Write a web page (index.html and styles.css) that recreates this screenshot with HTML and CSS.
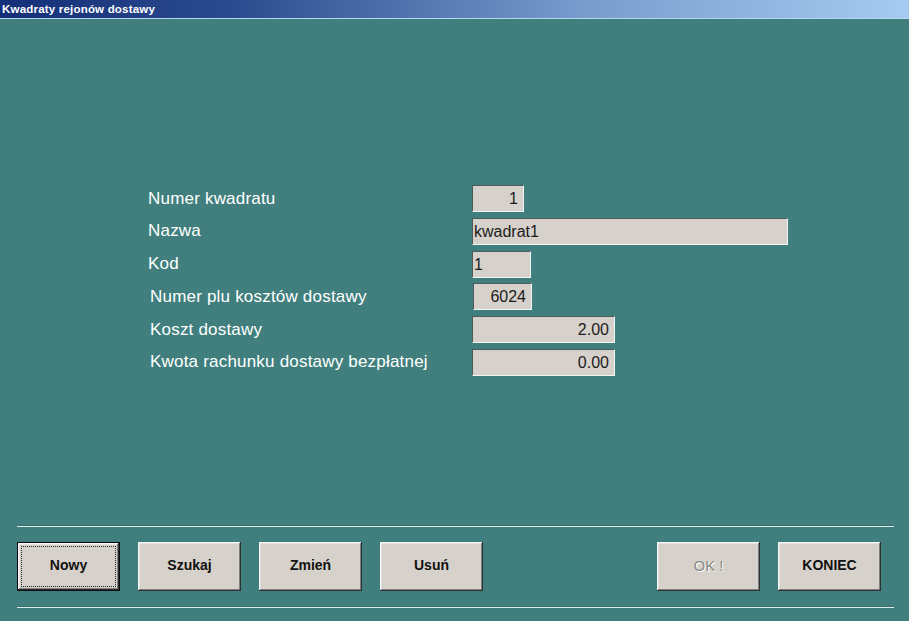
FILE: index.html
```html
<!DOCTYPE html>
<html lang="pl">
<head>
<meta charset="utf-8">
<title>Kwadraty rejonów dostawy</title>
<link rel="stylesheet" href="styles.css">
</head>
<body>
<div class="window">
  <div class="titlebar">Kwadraty rejonów dostawy</div>
  <div class="client">
    <div class="form">
      <div class="label">Numer kwadratu</div>
      <div class="field w-num right">1</div>

      <div class="label">Nazwa</div>
      <div class="field w-name">kwadrat1</div>

      <div class="label">Kod</div>
      <div class="field w-kod">1</div>

      <div class="label shifted">Numer plu kosztów dostawy</div>
      <div class="field w-kod right shifted-f">6024</div>

      <div class="label shifted">Koszt dostawy</div>
      <div class="field w-amt right">2.00</div>

      <div class="label shifted">Kwota rachunku dostawy bezpłatnej</div>
      <div class="field w-amt right">0.00</div>
    </div>

    <div class="footer">
      <div class="sep"></div>
      <div class="buttons">
        <div class="group">
          <button class="btn default"><span class="focus">Nowy</span></button>
          <button class="btn">Szukaj</button>
          <button class="btn">Zmień</button>
          <button class="btn">Usuń</button>
        </div>
        <div class="group right-group">
          <button class="btn disabled">OK !</button>
          <button class="btn">KONIEC</button>
        </div>
      </div>
      <div class="sep"></div>
    </div>
  </div>
</div>
</body>
</html>
```

FILE: styles.css
```css
html, body {
  margin: 0;
  padding: 0;
}
body {
  width: 909px;
  height: 621px;
  overflow: hidden;
  background: #407f7d;
  font-family: "Liberation Sans", Arial, sans-serif;
}
.window {
  display: flex;
  flex-direction: column;
  height: 621px;
}
.titlebar {
  height: 18px;
  line-height: 18px;
  padding-left: 2px;
  border-bottom: 1px solid #b4d6ee;
  background: linear-gradient(to right, #142f78 0%, #2b4a8e 25%, #7b9dce 65%, #a6caf0 100%);
  color: #ffffff;
  font-family: "Liberation Sans", Arial, sans-serif;
  font-weight: bold;
  font-size: 11.5px;
  letter-spacing: 0.2px;
  white-space: nowrap;
}
.client {
  flex: 1;
  display: flex;
  flex-direction: column;
}
.form {
  margin-top: 166px;
  margin-left: 148px;
  display: grid;
  grid-template-columns: 324px auto;
  grid-auto-rows: 27px;
  row-gap: 5.8px;
  align-items: center;
}
.label {
  color: #ffffff;
  font-size: 17px;
  letter-spacing: 0.2px;
  white-space: nowrap;
}
.label.shifted {
  padding-left: 2px;
}
.field {
  box-sizing: border-box;
  height: 27px;
  line-height: 25px;
  background: #d6d1ca;
  color: #1c1c1c;
  font-size: 16px;
  padding: 0 5px 0 1px;
  border-top: 1px solid #4e5a5a;
  border-left: 1px solid #4e5a5a;
  border-bottom: 1px solid #eef6f6;
  border-right: 1px solid #eef6f6;
  white-space: nowrap;
}
.field.right {
  text-align: right;
}
.field.shifted-f {
  margin-left: 1px;
}
.w-num { width: 52px; }
.w-name { width: 316px; }
.w-kod { width: 59px; }
.w-amt { width: 143px; }

.footer {
  margin-top: auto;
  padding: 0 15px 13px 17px;
  display: flex;
  flex-direction: column;
}
.sep {
  height: 1px;
  background: #dcecec;
  box-shadow: 0 -1px 0 #386e6c;
}
.buttons {
  display: flex;
  justify-content: space-between;
  padding: 15px 13px 16px 0;
}
.group {
  display: flex;
  gap: 18px;
}
.btn {
  box-sizing: border-box;
  width: 103px;
  height: 49px;
  margin: 0;
  padding: 0 0 3px 0;
  border: none;
  background: #d6d1ca;
  font-family: "Liberation Sans", Arial, sans-serif;
  font-weight: bold;
  font-size: 14px;
  color: #111111;
  box-shadow:
    inset -1px -1px 0 #2e3232,
    inset 1px 1px 0 #f4f8f8,
    inset -2px -2px 0 #7e8080,
    inset 2px 2px 0 #e4e2de;
}
.btn.default {
  border: 1px solid #0a0a0a;
  display: flex;
  align-items: stretch;
  justify-content: stretch;
  padding: 3px;
}
.btn.default .focus {
  flex: 1;
  display: flex;
  align-items: center;
  justify-content: center;
  padding-bottom: 3px;
  border: 1px dotted #222222;
}
.btn.disabled {
  color: #8a8a88;
  text-shadow: 1px 1px 0 #ffffff;
  font-weight: normal;
  font-size: 15px;
}
```
